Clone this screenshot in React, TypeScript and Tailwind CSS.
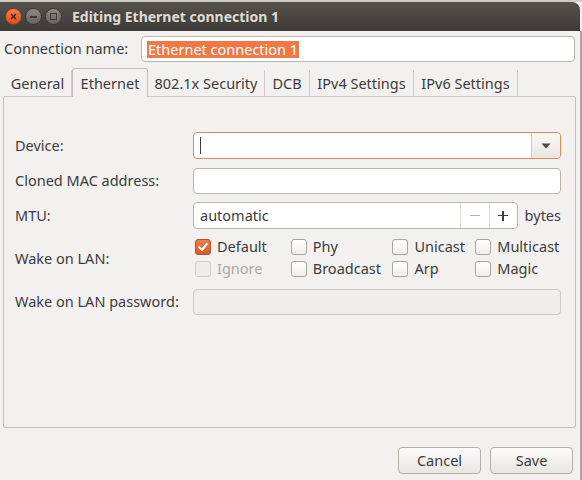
import React from "react";

const font = { fontFamily: '"Noto Sans", "Open Sans", sans-serif' };

function Check({ checked, disabled }: { checked?: boolean; disabled?: boolean }) {
  if (checked) {
    return (
      <span className="inline-flex h-[16px] w-[16px] items-center justify-center rounded-[3px] border border-[#b3532a] bg-gradient-to-b from-[#ec7d4b] to-[#d85a26]">
        <svg width="12" height="12" viewBox="0 0 12 12">
          <path d="M2.2 6.3 L5 9 L9.8 2.8" stroke="white" strokeWidth="2.1" fill="none" strokeLinecap="round" strokeLinejoin="round" />
        </svg>
      </span>
    );
  }
  return (
    <span
      className={
        disabled
          ? "inline-block h-[16px] w-[16px] rounded-[3px] border border-[#d2cfcb] bg-[#eeedeb]"
          : "inline-block h-[16px] w-[16px] rounded-[3px] border border-[#a9a59f] bg-gradient-to-b from-[#ffffff] to-[#f0efed]"
      }
    />
  );
}

function CB({ label, checked, disabled, w }: { label: string; checked?: boolean; disabled?: boolean; w: string }) {
  return (
    <div className={"flex items-center gap-[6px] " + w}>
      <Check checked={checked} disabled={disabled} />
      <span className={disabled ? "text-[#acaaa6]" : "text-[#3c3c3c]"}>{label}</span>
    </div>
  );
}

export default function App() {
  return (
    <div className="relative h-[480px] w-[582px] overflow-hidden bg-[#f2f1f0] text-[14.5px] text-[#3c3c3c]" style={font}>
      <div className="h-[2px] bg-[#cfcbc5]" />
      <div className="flex h-[29px] w-[580px] items-center rounded-tr-[8px] bg-gradient-to-b from-[#55524c] to-[#3d3b37] pl-[5px]">
        <div className="flex items-center gap-[3px]">
          <span className="flex h-[17px] w-[17px] items-center justify-center rounded-full border border-[#8a3a1c] bg-gradient-to-b from-[#f47b4c] to-[#d94e1c]">
            <svg width="7" height="7" viewBox="0 0 7 7">
              <path d="M1 1 L6 6 M6 1 L1 6" stroke="#4a1d0c" strokeWidth="1.4" />
            </svg>
          </span>
          <span className="flex h-[17px] w-[17px] items-center justify-center rounded-full border border-[#3a3834] bg-gradient-to-b from-[#8e8b85] to-[#66635e]">
            <span className="h-[2px] w-[7px] bg-[#3c3a36]" />
          </span>
          <span className="flex h-[17px] w-[17px] items-center justify-center rounded-full border border-[#3a3834] bg-gradient-to-b from-[#8e8b85] to-[#66635e]">
            <span className="h-[7px] w-[7px] border border-[#3c3a36]" />
          </span>
        </div>
        <span className="ml-[10px] text-[14px] font-bold text-[#dfdbd2]">Editing Ethernet connection 1</span>
      </div>

      <div className="absolute bottom-0 right-0 top-[31px] w-[2px] bg-[#a9a6a1]" />

      {/* connection name */}
      <div className="mt-[5px] flex h-[26px] items-center pl-[4px]">
        <span className="w-[137px]">Connection name:</span>
        <div className="flex h-[26px] w-[434px] items-center rounded-[4px] border border-[#b8b4ae] bg-white pl-[5px]">
          <span className="bg-[#f07746] px-[1px] leading-[17px] text-white">Ethernet connection 1</span>
        </div>
      </div>

      {/* tabs */}
      <div className="mt-[6px] flex h-[29px] items-end pl-[4px]">
        <div className="flex h-[27px] w-[68px] items-center justify-center border-b border-r border-[#cdc9c4] pt-[2px]">General</div>
        <div className="flex h-[29px] w-[76px] items-center justify-center rounded-t-[3px] border border-b-0 border-[#c3bfba] bg-[#f2f1f0] pt-[1px]">Ethernet</div>
        <div className="flex h-[27px] w-[117px] items-center justify-center border-b border-r border-[#cdc9c4] pt-[2px]">802.1x Security</div>
        <div className="flex h-[27px] w-[45px] items-center justify-center border-b border-r border-[#cdc9c4] pt-[2px]">DCB</div>
        <div className="flex h-[27px] w-[104px] items-center justify-center border-b border-r border-[#cdc9c4] pt-[2px]">IPv4 Settings</div>
        <div className="flex h-[27px] w-[104px] items-center justify-center border-b border-r border-[#cdc9c4] pt-[2px]">IPv6 Settings</div>
        <div className="h-[27px] w-[57px] border-b border-[#cdc9c4]" />
      </div>

      {/* panel */}
      <div className="ml-[3px] h-[331px] w-[573px] rounded-b-[3px] border border-t-0 border-[#c3bfba] px-[11px] pt-[35px]">
        <div className="grid grid-cols-[178px_368px] gap-y-0">
          <div className="flex h-[27px] items-center">Device:</div>
          <div className="flex h-[27px] rounded-[4px] border border-[#e8835a] bg-white">
            <div className="flex flex-1 items-center pl-[6px]">
              <span className="h-[17px] w-[1px] bg-[#3c3c3c]" />
            </div>
            <div className="flex w-[29px] items-center justify-center rounded-r-[4px] border-l border-[#d0ccc7] bg-gradient-to-b from-[#f8f7f6] to-[#e9e7e4]">
              <svg width="10" height="6" viewBox="0 0 10 6">
                <path d="M0.5 0.5 L9.5 0.5 L5 5.5 Z" fill="#4a4a4a" />
              </svg>
            </div>
          </div>

          <div className="mt-[9px] flex h-[26px] items-center">Cloned MAC address:</div>
          <div className="mt-[9px] h-[26px] rounded-[4px] border border-[#b8b4ae] bg-white" />

          <div className="mt-[8px] flex h-[27px] items-center">MTU:</div>
          <div className="mt-[8px] flex h-[27px] items-center">
            <div className="flex h-[27px] w-[326px] rounded-[4px] border border-[#b8b4ae] bg-white">
              <div className="flex flex-1 items-center pl-[6px]">automatic</div>
              <div className="flex w-[29px] items-center justify-center border-l border-[#dedbd7] text-[#b5b2ad]">
                <span className="h-[1.5px] w-[10px] bg-[#b5b2ad]" />
              </div>
              <div className="relative flex w-[28px] items-center justify-center border-l border-[#dedbd7]">
                <span className="h-[1.5px] w-[10px] bg-[#3c3c3c]" />
                <span className="absolute h-[10px] w-[1.5px] bg-[#3c3c3c]" />
              </div>
            </div>
            <span className="ml-[7px]">bytes</span>
          </div>

          <div className="flex h-[60px] items-center">Wake on LAN:</div>
          <div className="flex h-[60px] flex-col gap-[3px] pl-[2px] pt-[8px]">
            <div className="flex h-[19px] items-center">
              <CB label="Default" checked w="w-[96px]" />
              <CB label="Phy" w="w-[102px]" />
              <CB label="Unicast" w="w-[83px]" />
              <CB label="Multicast" w="w-[86px]" />
            </div>
            <div className="flex h-[19px] items-center">
              <CB label="Ignore" disabled w="w-[96px]" />
              <CB label="Broadcast" w="w-[102px]" />
              <CB label="Arp" w="w-[83px]" />
              <CB label="Magic" w="w-[86px]" />
            </div>
          </div>

          <div className="flex h-[26px] items-center">Wake on LAN password:</div>
          <div className="h-[26px] rounded-[4px] border border-[#cdc9c4] bg-[#efeeec]" />
        </div>
      </div>

      {/* buttons */}
      <div className="mt-[19px] flex justify-end gap-[9px] pr-[9px]">
        <button className="h-[27px] w-[83px] rounded-[4px] border border-[#b3afa9] bg-gradient-to-b from-[#fbfbfa] to-[#e8e6e3] text-[#3c3c3c]">Cancel</button>
        <button className="h-[27px] w-[83px] rounded-[4px] border border-[#b3afa9] bg-gradient-to-b from-[#fbfbfa] to-[#e8e6e3] text-[#3c3c3c]">Save</button>
      </div>
    </div>
  );
}
